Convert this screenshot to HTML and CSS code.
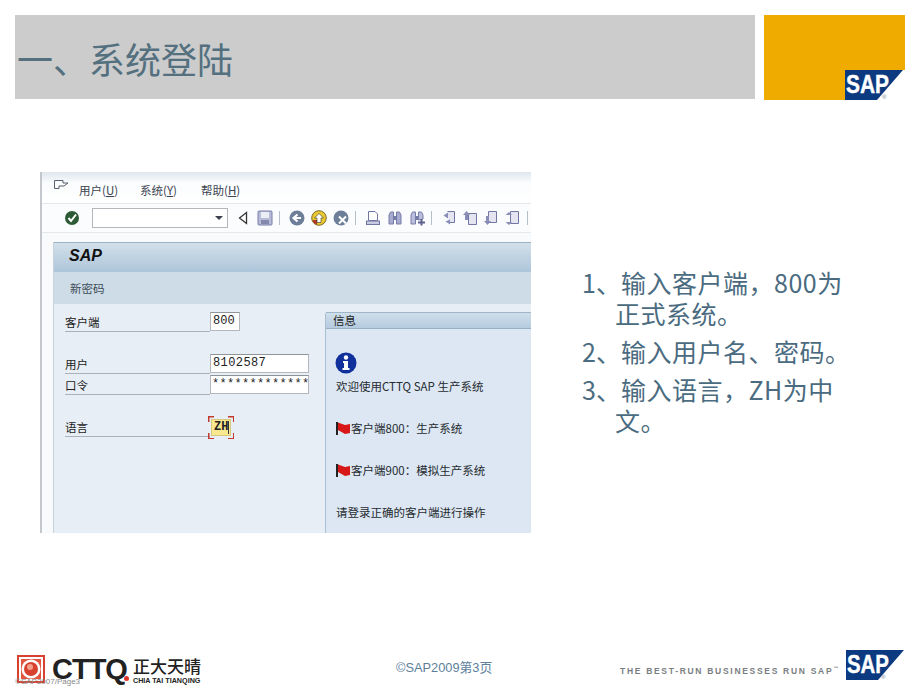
FILE: index.html
```html
<!DOCTYPE html>
<html lang="zh">
<head>
    <meta charset="UTF-8">
    <title>系统登陆</title>
    <link rel="stylesheet" href="styles.css">
</head>
<body>
    <div class="slide">
        <header class="top">
            <h1 class="title-band">一、系统登陆</h1>
            <div class="gold-box">
                <svg class="sap-logo-small" width="60" height="30" viewBox="0 0 60 30">
                    <rect width="60" height="30" fill="#fff"/>
                    <polygon points="0,0 58,0 32,30 0,30" fill="#0b3a80"/>
                    <text x="1" y="23" class="sap-mark" font-size="25" textLength="43" lengthAdjust="spacingAndGlyphs">SAP</text>
                    <text x="37" y="29" class="sap-reg" font-size="6">®</text>
                </svg>
            </div>
        </header>

        <main class="content">
            <div class="shot">
                <div class="menubar">
                    <svg class="menu-icon" width="16" height="12" viewBox="0 0 16 12">
                        <path d="M1.500 1.500H10V4H15L11 7H6V9.500H1.500Z" fill="none" stroke="#56606e"/>
                    </svg>
                    <span class="menu-item">用户(<u>U</u>)</span>
                    <span class="menu-item">系统(<u>Y</u>)</span>
                    <span class="menu-item">帮助(<u>H</u>)</span>
                </div>
                <div class="toolbar">
                    <svg class="tb-check" width="16" height="16" viewBox="0 0 16 16">
                        <circle cx="8" cy="8" r="7" fill="#2c5a34"/>
                        <path d="M4.500 8L7 11L12 4.500" fill="none" stroke="#fff" stroke-width="2"/>
                    </svg>
                    <div class="cmd-box"><span class="cmd-arrow"></span></div>
                    <svg class="tb-icon" width="13" height="16" viewBox="0 0 13 16">
                        <path d="M8.500 2.500V13.500L1.500 8Z" fill="#fff" stroke="#333" stroke-width="1.300"/>
                    </svg>
                    <svg class="tb-icon" width="16" height="16" viewBox="0 0 16 16">
                        <rect x="1" y="1" width="14" height="14" rx="1" fill="#b9bcd8" stroke="#777ca8"/>
                        <rect x="4" y="2" width="8" height="6" fill="#eceef6"/>
                        <rect x="4" y="10" width="8" height="4" fill="#8488ad"/>
                    </svg>
                    <span class="tb-sep"></span>
                    <svg class="tb-icon" width="16" height="16" viewBox="0 0 16 16">
                        <circle cx="8" cy="8" r="7.500" fill="#6d7e99"/>
                        <path d="M12 8H6M8.500 4.500L4.500 8L8.500 11.500" fill="none" stroke="#fff" stroke-width="2.200"/>
                    </svg>
                    <svg class="tb-icon" width="16" height="16" viewBox="0 0 16 16">
                        <circle cx="8" cy="8" r="7.300" fill="#e8c92e" stroke="#7d6a2a"/>
                        <path d="M1.500 10A7 7 0 0 0 6 14.800V10Z" fill="#b3392b"/>
                        <path d="M8 3.500L12.500 8H10V12.500H6V8H3.500Z" fill="#fff" stroke="#333" stroke-width=".6"/>
                    </svg>
                    <svg class="tb-icon" width="16" height="16" viewBox="0 0 16 16">
                        <circle cx="8" cy="8" r="7.500" fill="#6d7e99"/>
                        <path d="M6 6.500L13 13.500M13 6.500L6 13.500" stroke="#fff" stroke-width="2"/>
                    </svg>
                    <span class="tb-sep"></span>
                    <svg class="tb-icon" width="16" height="16" viewBox="0 0 16 16">
                        <path d="M3.500 1.500H10L12.500 4V10.500H3.500Z" fill="#fff" stroke="#7276a2"/>
                        <rect x="1.500" y="11" width="13" height="3.500" fill="#c9cbe2" stroke="#7276a2"/>
                    </svg>
                    <svg class="tb-icon" width="16" height="16" viewBox="0 0 16 16">
                        <path d="M2 14V5L3.500 2H6.500V14ZM9.500 14V2H12.500L14 5V14Z" fill="#a8abd0" stroke="#777ca8"/>
                        <rect x="6.500" y="6" width="3" height="4" fill="#777ca8"/>
                    </svg>
                    <svg class="tb-icon tb-tight" width="17" height="16" viewBox="0 0 17 16">
                        <path d="M2 14V5L3.500 2H6.500V14ZM9.500 10V2H12.500L14 5V9Z" fill="#bcbfdc" stroke="#777ca8"/>
                        <rect x="6.500" y="6" width="3" height="4" fill="#777ca8"/>
                        <path d="M9 12.500H16M12.500 9V15.500" stroke="#5d628e" stroke-width="2"/>
                    </svg>
                    <span class="tb-sep"></span>
                    <svg class="tb-icon tb-tight" width="16" height="16" viewBox="0 0 16 16">
                        <path d="M6.500 1.500H13.500V12.500H8" fill="#e4e5f1" stroke="#7276a2"/>
                        <path d="M7 2.500L2.500 5.500L7 8.500Z" fill="#8a8db5"/>
                        <path d="M9 9.500L4.500 11.500L9 14.500Z" fill="#8a8db5"/>
                    </svg>
                    <svg class="tb-icon tb-tight" width="16" height="16" viewBox="0 0 16 16">
                        <path d="M6.500 3.500H14.500V14.500H6.500Z" fill="#e4e5f1" stroke="#7276a2"/>
                        <path d="M4.500 1L1 5H3V10H6V5H8Z" fill="#8a8db5"/>
                    </svg>
                    <svg class="tb-icon tb-tight" width="16" height="16" viewBox="0 0 16 16">
                        <path d="M5.500 1.500H13.500V12.500H5.500Z" fill="#e4e5f1" stroke="#7276a2"/>
                        <path d="M4.500 15L1 11H3V6H6V11H8Z" fill="#8a8db5"/>
                    </svg>
                    <svg class="tb-icon tb-tight" width="16" height="16" viewBox="0 0 16 16">
                        <path d="M6.500 1.500H14.500V13.500H6.500Z" fill="#e4e5f1" stroke="#7276a2"/>
                        <path d="M5 2L1.500 5H8ZM5 15L1.500 12H8Z" fill="#8a8db5"/>
                    </svg>
                    <span class="tb-sep tb-sep-end"></span>
                </div>
                <div class="screen">
                    <div class="screen-title">SAP</div>
                    <div class="screen-sub">新密码</div>
                    <div class="screen-body">
                        <div class="login-form">
                            <div class="form-row row-client">
                                <span class="form-label">客户端</span>
                                <span class="field field-client">800</span>
                            </div>
                            <div class="form-row row-user">
                                <span class="form-label">用户</span>
                                <span class="field field-user">8102587</span>
                            </div>
                            <div class="form-row row-pass">
                                <span class="form-label">口令</span>
                                <span class="field field-pass">*************</span>
                            </div>
                            <div class="form-row row-lang">
                                <span class="form-label">语言</span>
                                <span class="field-focus"><span class="field-lang">ZH<span class="caret"></span></span></span>
                            </div>
                        </div>
                        <div class="info-panel">
                            <div class="info-head">信息</div>
                            <div class="info-body">
                                <svg class="info-icon" width="22" height="22" viewBox="0 0 22 22">
                                    <circle cx="11" cy="11" r="10.500" fill="#10309c"/>
                                    <circle cx="11" cy="5.500" r="2.200" fill="#fff"/>
                                    <path d="M8 9H13V16H14.500V18H7.500V16H9V11H8Z" fill="#fff"/>
                                </svg>
                                <p class="info-line line-first">欢迎使用CTTQ SAP 生产系统</p>
                                <p class="info-line">
                                    <svg class="flag" width="15" height="15" viewBox="0 0 15 15">
                                        <path d="M1 1V14" stroke="#222" stroke-width="2"/>
                                        <path d="M2 1.500L9 4L14 3V12L9 13L2 9Z" fill="#d81818"/>
                                    </svg>客户端800：生产系统
                                </p>
                                <p class="info-line">
                                    <svg class="flag" width="15" height="15" viewBox="0 0 15 15">
                                        <path d="M1 1V14" stroke="#222" stroke-width="2"/>
                                        <path d="M2 1.500L9 4L14 3V12L9 13L2 9Z" fill="#d81818"/>
                                    </svg>客户端900：模拟生产系统
                                </p>
                                <p class="info-line">请登录正确的客户端进行操作</p>
                            </div>
                        </div>
                    </div>
                </div>
            </div>

            <ol class="steps">
                <li><span class="step-no">1、</span>输入客户端，800为正式系统。</li>
                <li><span class="step-no">2、</span>输入用户名、密码。</li>
                <li><span class="step-no">3、</span>输入语言，ZH为中文。</li>
            </ol>
        </main>

        <footer class="bottom">
            <div class="cttq">
                <svg class="cttq-icon" width="28" height="28" viewBox="0 0 28 28">
                    <rect x="1" y="1" width="26" height="26" fill="#fff" stroke="#d8412f" stroke-width="2"/>
                    <path d="M4 4H24V24H4Z" fill="#e2563f"/>
                    <circle cx="14" cy="14" r="9.500" fill="#fff"/>
                    <circle cx="14" cy="14" r="7" fill="#d8412f"/>
                    <circle cx="13" cy="12" r="3" fill="#f3a08c"/>
                </svg>
                <span class="cttq-name">CTTQ</span>
                <span class="cttq-dot"></span>
                <div class="cttq-cn">
                    <span class="cttq-zh">正大天晴</span>
                    <span class="cttq-en">CHIA TAI TIANQING</span>
                </div>
            </div>
            <div class="page-no">©SAP2009第3页</div>
            <div class="tagline">THE BEST-RUN BUSINESSES RUN SAP<sup>™</sup></div>
            <svg class="sap-logo" width="59" height="30" viewBox="0 0 59 30">
                <polygon points="0,0 58,0 32,30 0,30" fill="#0b3a80"/>
                <text x="1" y="23" class="sap-mark" font-size="25" textLength="42" lengthAdjust="spacingAndGlyphs">SAP</text>
                <text x="35" y="29" class="sap-reg" font-size="6">®</text>
            </svg>
            <span class="old-page">©SAP2007/Page3</span>
        </footer>
    </div>
</body>
</html>
```

FILE: styles.css
```css
html, body {
    margin: 0;
    padding: 0;
    background-color: #fff;
}
.slide {
    position: relative;
    width: 920px;
    height: 690px;
    overflow: hidden;
    font-family: "Liberation Sans", "Noto Sans CJK SC", sans-serif;
}

/* header */
.top {
    display: flex;
    gap: 9px;
    padding: 15px 0 0 15px;
}
.title-band {
    width: 740px;
    height: 84px;
    margin: 0;
    background-color: #cccccc;
    color: #54707f;
    font-family: "Noto Sans CJK SC", sans-serif;
    font-size: 36px;
    font-weight: 400;
    line-height: 87px;
    white-space: nowrap;
    padding-left: 2px;
    box-sizing: border-box;
}
.gold-box {
    display: flex;
    justify-content: flex-end;
    align-items: flex-end;
    width: 141px;
    height: 85px;
    background-color: #f0ab00;
}
.sap-logo-small {
    display: block;
}
.sap-mark {
    fill: #fff;
    stroke: #fff;
    stroke-width: .4;
    font-family: "Liberation Sans", sans-serif;
    font-weight: bold;
}
.sap-reg {
    fill: #6f7f9a;
    font-family: "Liberation Sans", sans-serif;
}

/* main area */
.content {
    display: flex;
    height: 361px;
    margin-top: 72px;
    padding-left: 40px;
}
.shot {
    width: 491px;
    height: 361px;
    overflow: hidden;
    flex-shrink: 0;
    box-sizing: border-box;
    border-left: 2px solid #c4c8cc;
    background-color: #f8fafc;
    color: #222;
    font-family: "Noto Sans CJK SC", sans-serif;
    font-size: 11.500px;
}
.menubar {
    display: flex;
    align-items: center;
    height: 32px;
    background: linear-gradient(#dfe6ee, #fafcfd 35%, #fff);
    border-bottom: 1px solid #e3e8ec;
    box-sizing: border-box;
    padding: 4px 0 0 11px;
}
.menu-icon {
    margin: 0 10px 9px 0;
}
.menu-item {
    width: 61px;
    color: #3c4450;
}
.toolbar {
    display: flex;
    align-items: center;
    height: 29px;
    background-color: #fbfcfd;
    border-bottom: 1px solid #e4e9ee;
    box-sizing: border-box;
    padding-left: 22px;
}
.tb-check {
    margin-right: 12px;
    flex-shrink: 0;
}
.cmd-box {
    position: relative;
    width: 136px;
    height: 20px;
    margin-right: 10px;
    background-color: #fff;
    border: 1px solid #b4b8bc;
    box-sizing: border-box;
    flex-shrink: 0;
}
.cmd-arrow {
    position: absolute;
    right: 4px;
    top: 7px;
    border-left: 4px solid transparent;
    border-right: 4px solid transparent;
    border-top: 4px solid #39404a;
}
.tb-icon {
    margin-right: 6px;
    flex-shrink: 0;
}
.tb-tight {
    margin-right: 5px;
}
.tb-sep {
    width: 1px;
    height: 14px;
    margin-right: 9px;
    background-color: #b5bfca;
    flex-shrink: 0;
}
.tb-sep-end {
    margin-left: 2px;
}
.screen {
    margin: 9px 0 0 11px;
    border-left: 1px solid #c6d2dc;
}
.screen-title {
    height: 30px;
    background: linear-gradient(#d2e0ea, #adc5da);
    border-top: 1px solid #9fb2c2;
    box-sizing: border-box;
    padding-left: 15px;
    font-family: "Liberation Sans", sans-serif;
    font-size: 16px;
    font-weight: bold;
    font-style: italic;
    line-height: 25px;
    color: #111;
}
.screen-sub {
    height: 32px;
    background-color: #cddce7;
    padding-left: 16px;
    line-height: 32px;
    color: #3e4c58;
}
.screen-body {
    display: flex;
    height: 229px;
    background-color: #e8eef5;
}

/* login form */
.login-form {
    width: 271px;
    flex-shrink: 0;
    padding: 8px 0 0 11px;
    box-sizing: border-box;
}
.form-row {
    position: relative;
    display: flex;
    align-items: flex-end;
    width: 145px;
    border-bottom: 1px solid #aab1b8;
}
.form-label {
    line-height: 17px;
}
.row-client {
    height: 19px;
}
.row-user {
    height: 21px;
    margin-top: 20px;
}
.row-pass {
    height: 20px;
}
.row-lang {
    height: 21px;
    margin-top: 20px;
}
.field {
    position: absolute;
    left: 145px;
    bottom: 0;
    height: 19px;
    background-color: #fff;
    border: 1px solid #b4b8bc;
    border-top-color: #8f949a;
    box-sizing: border-box;
    font-family: "Liberation Mono", monospace;
    font-size: 12px;
    line-height: 17px;
    padding-left: 2px;
    color: #222;
    overflow: hidden;
    white-space: nowrap;
}
.field-client {
    width: 30px;
}
.field-user,
.field-pass {
    width: 99px;
}
.field-user {
    letter-spacing: 0.400px;
}
.field-pass {
    letter-spacing: 0.300px;
    padding-left: 1px;
}
.field-focus {
    position: absolute;
    left: 143px;
    top: 1px;
    width: 26px;
    height: 23px;
    box-sizing: border-box;
    padding: 3px;
    background:
        linear-gradient(#c0392b, #c0392b) 0 0 / 6px 1.500px no-repeat,
        linear-gradient(#c0392b, #c0392b) 0 0 / 1.500px 6px no-repeat,
        linear-gradient(#c0392b, #c0392b) 100% 0 / 6px 1.500px no-repeat,
        linear-gradient(#c0392b, #c0392b) 100% 0 / 1.500px 6px no-repeat,
        linear-gradient(#c0392b, #c0392b) 0 100% / 6px 1.500px no-repeat,
        linear-gradient(#c0392b, #c0392b) 0 100% / 1.500px 6px no-repeat,
        linear-gradient(#c0392b, #c0392b) 100% 100% / 6px 1.500px no-repeat,
        linear-gradient(#c0392b, #c0392b) 100% 100% / 1.500px 6px no-repeat;
}
.field-lang {
    display: flex;
    align-items: center;
    height: 17px;
    padding-left: 2px;
    background-color: #f9e88f;
    border: 1px solid #d8c87c;
    box-sizing: border-box;
    font-family: "Liberation Mono", monospace;
    font-size: 12px;
    font-weight: bold;
    line-height: 15px;
}
.caret {
    width: 1px;
    height: 13px;
    background-color: #333;
}

/* info box */
.info-panel {
    flex: 1;
    margin-top: 8px;
    border-left: 1px solid #a9c0d4;
    background-color: #dce7f3;
    border-top-left-radius: 3px;
}
.info-head {
    height: 17px;
    background: linear-gradient(#cfdfea, #b5cbe0);
    border-top: 1px solid #a0b6c8;
    border-bottom: 1px solid #97b0c6;
    box-sizing: border-box;
    padding-left: 7px;
    line-height: 15px;
}
.info-body {
    padding: 23px 0 0 9px;
}
.info-icon {
    display: block;
    margin-bottom: 2px;
}
.info-line {
    display: flex;
    align-items: center;
    height: 20px;
    margin: 22px 0 0 1px;
    line-height: 20px;
    white-space: nowrap;
    color: #262b30;
}
.line-first {
    margin-top: 0;
}
.flag {
    flex-shrink: 0;
}

/* steps */
.steps {
    list-style: none;
    width: 275px;
    flex-shrink: 0;
    margin: 95px 0 0 51px;
    padding: 0;
    color: #4a6b80;
    font-family: "Noto Sans CJK SC", sans-serif;
    font-size: 25px;
    font-weight: 400;
    letter-spacing: 0.500px;
    line-height: 31px;
}
.steps li {
    padding-left: 33px;
    text-indent: -33px;
    margin-bottom: 7px;
}
.step-no {
    display: inline-block;
    width: 39px;
    text-indent: 0;
    letter-spacing: 0;
}

/* footer */
.bottom {
    position: absolute;
    left: 0;
    right: 0;
    top: 650px;
    height: 40px;
    display: flex;
}
.cttq {
    display: flex;
    align-items: center;
    width: 396px;
    height: 33px;
    padding: 5px 0 0 17px;
    box-sizing: border-box;
}
.cttq-icon {
    flex-shrink: 0;
}
.cttq-name {
    margin-left: 7px;
    font-family: "Liberation Sans", sans-serif;
    font-size: 29px;
    font-weight: bold;
    color: #222;
    letter-spacing: -1px;
    line-height: 28px;
}
.cttq-dot {
    width: 5px;
    height: 5px;
    margin: 18px 0 0 -3px;
    border-radius: 50%;
    background-color: #e0342a;
}
.cttq-cn {
    display: flex;
    flex-direction: column;
    margin: 3px 0 0 4px;
    color: #222;
}
.cttq-zh {
    font-family: "Noto Sans CJK SC", sans-serif;
    font-size: 17px;
    font-weight: 500;
    line-height: 19px;
    white-space: nowrap;
}
.cttq-en {
    margin-top: 1px;
    font-size: 7.200px;
    font-weight: bold;
    line-height: 9px;
    white-space: nowrap;
}
.page-no {
    width: 224px;
    padding-top: 10px;
    color: #5d7f9c;
    font-size: 12.800px;
    line-height: 16px;
    white-space: nowrap;
}
.tagline {
    width: 226px;
    padding-top: 15px;
    color: #7a7e82;
    font-size: 8.500px;
    font-weight: bold;
    letter-spacing: 1.700px;
    line-height: 12px;
    white-space: nowrap;
}
.tagline sup {
    font-size: 5px;
    line-height: 0;
}
.sap-logo {
    display: block;
}
.old-page {
    position: absolute;
    left: 15px;
    top: 27px;
    color: #8a8a8a;
    font-size: 8px;
    line-height: 10px;
    white-space: nowrap;
}
```
